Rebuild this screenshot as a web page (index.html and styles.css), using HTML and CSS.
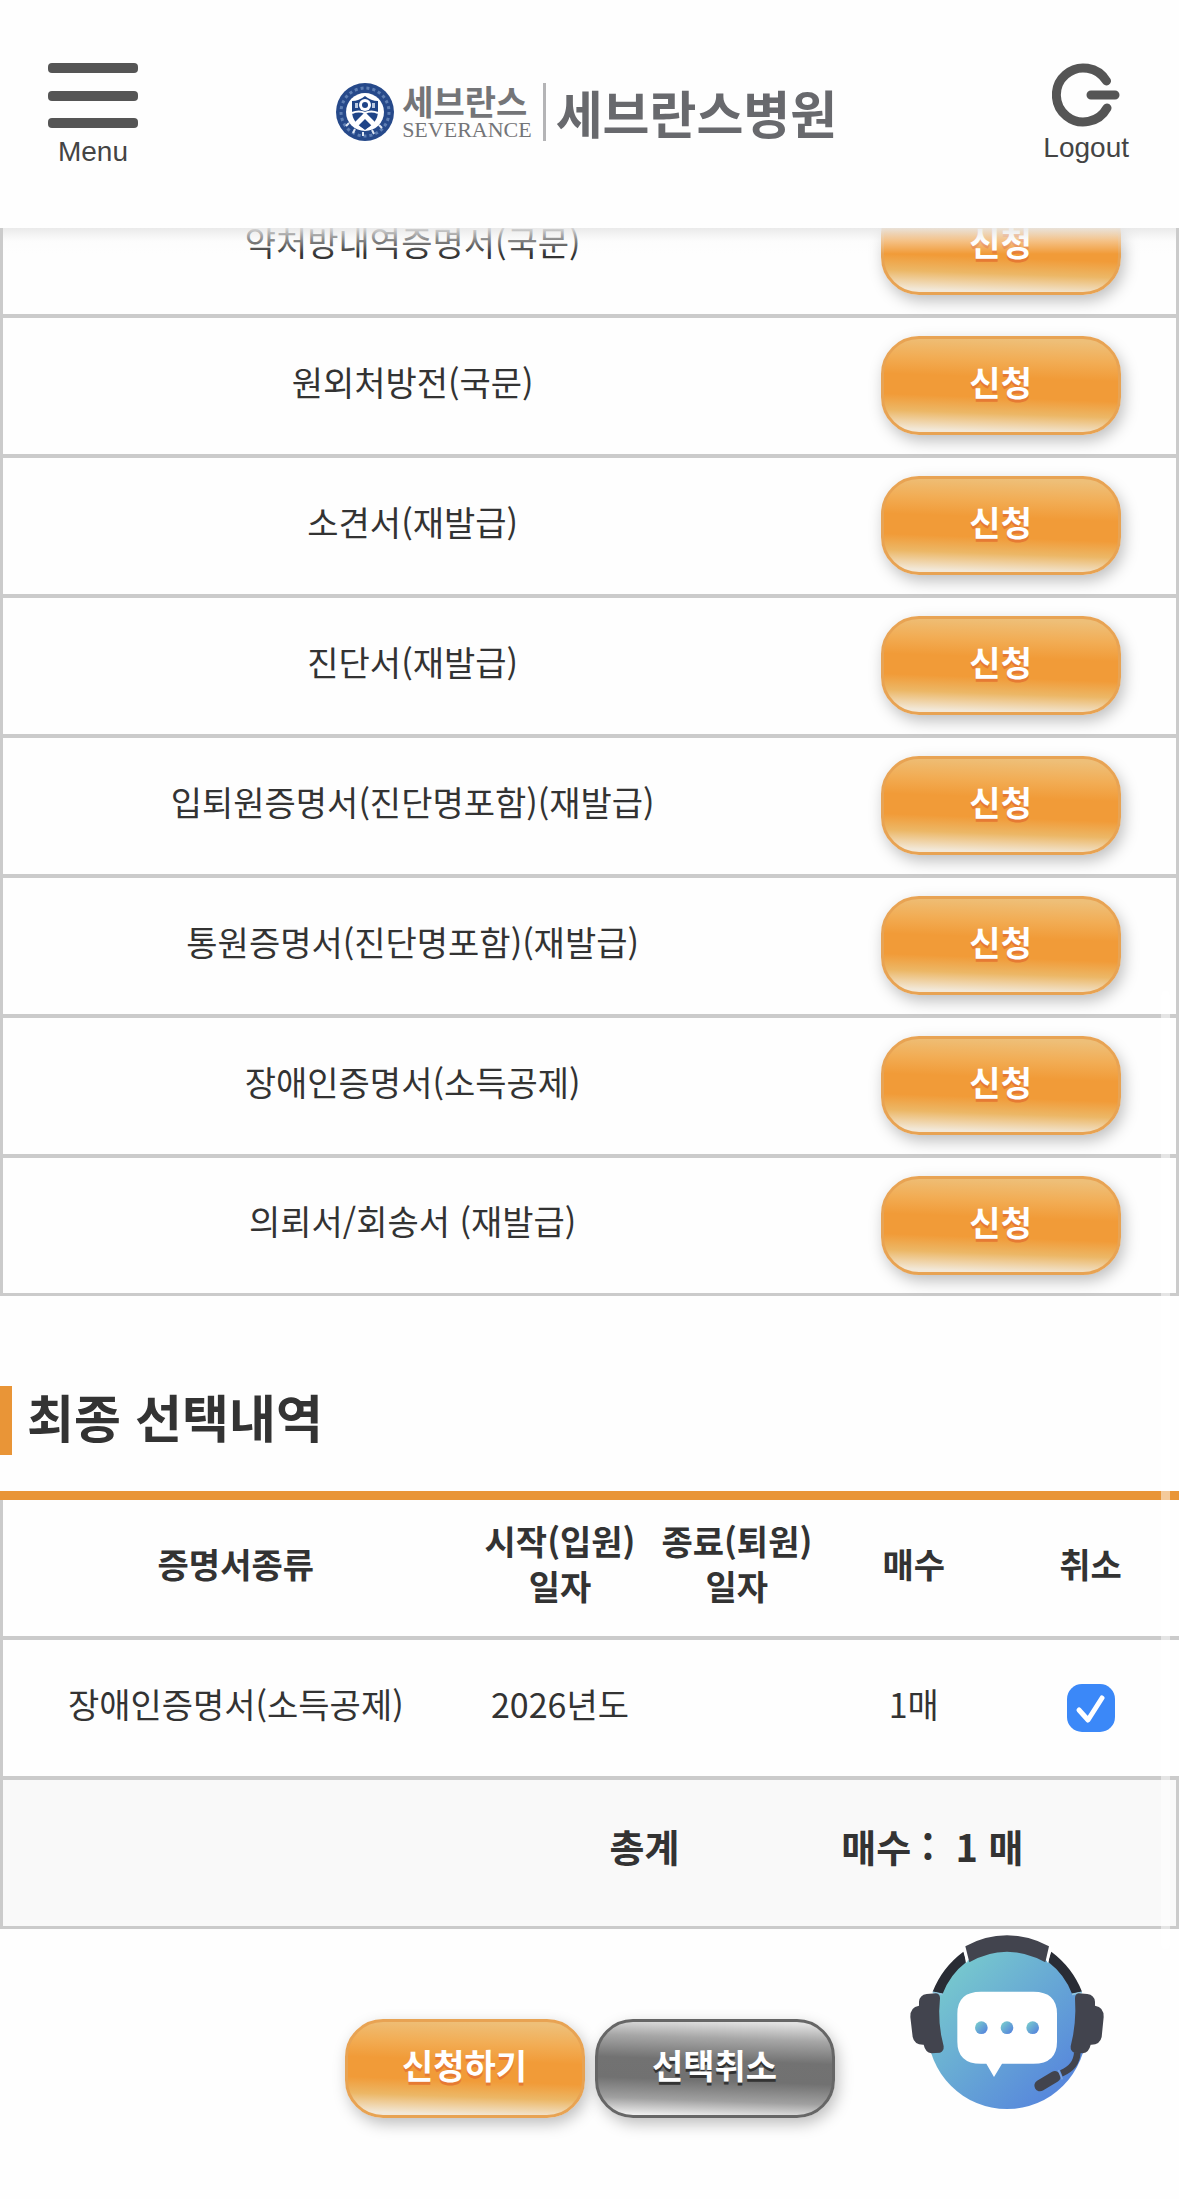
FILE: index.html
```
<!DOCTYPE html>
<html lang="ko">
<head>
    <meta charset="UTF-8">
    <meta name="viewport" content="width=device-width, initial-scale=1.0">
    <title>세브란스병원 - 증명서 신청</title>
    <link rel="stylesheet" href="styles.css">
</head>
<body>
    <header class="header">
        <button type="button" class="menu-btn">
            <span class="bars"><i></i><i></i><i></i></span>
            Menu
        </button>

        <a href="#" class="logo">
            <svg class="emblem" viewBox="0 0 58 58" aria-hidden="true">
                <circle cx="29" cy="29" r="29" fill="#26498a"/>
                <circle cx="29" cy="29" r="24" fill="none" stroke="#5f7fb3" stroke-width="3" stroke-dasharray="2 2" pathLength="100"/>
                <path d="M10 43l3-3M17 50l2-4M27 53v-4M38 51l-2-4M46 45l-3-3" stroke="#dfe7f3" stroke-width="2"/>
                <circle cx="29" cy="29" r="19" fill="#fff"/>
                <path d="M16 18q7 0 13-5 6 5 13 5v10q0 12-13 18-13-6-13-18z" fill="#1f4487"/>
                <path d="M16 30q7-3 13 0 6-3 13 0" fill="none" stroke="#fff" stroke-width="2"/>
                <circle cx="29" cy="22" r="6" fill="#fff"/>
                <circle cx="29" cy="22" r="3" fill="#1f4487"/>
                <path d="M19 20h3v5h-3zM36 20h3v5h-3z" fill="#b9c8e0"/>
                <path d="M18 40l11-11 11 11-4 3-7-7-7 7z" fill="#fff"/>
                <path d="M29 38l5 5-5 4-5-4z" fill="#1f4487"/>
            </svg>
            <span class="logo-brand">
                <strong>세브란스</strong>
                <small>SEVERANCE</small>
            </span>
            <span class="logo-name">세브란스병원</span>
        </a>

        <a href="#" class="logout-btn">
            <svg viewBox="0 0 68 64" aria-hidden="true">
                <path d="M54.500 18A27 27 0 1 0 55 45M39 32h24" fill="none" stroke="#555" stroke-width="9" stroke-linecap="round"/>
            </svg>
            Logout
        </a>
    </header>

    <main>
        <table class="cert-table">
            <tbody>
                <tr><td>약처방내역증명서(국문)</td><td><button type="button" class="btn">신청</button></td></tr>
                <tr><td>원외처방전(국문)</td><td><button type="button" class="btn">신청</button></td></tr>
                <tr><td>소견서(재발급)</td><td><button type="button" class="btn">신청</button></td></tr>
                <tr><td>진단서(재발급)</td><td><button type="button" class="btn">신청</button></td></tr>
                <tr><td>입퇴원증명서(진단명포함)(재발급)</td><td><button type="button" class="btn">신청</button></td></tr>
                <tr><td>통원증명서(진단명포함)(재발급)</td><td><button type="button" class="btn">신청</button></td></tr>
                <tr><td>장애인증명서(소득공제)</td><td><button type="button" class="btn">신청</button></td></tr>
                <tr><td>의뢰서/회송서 (재발급)</td><td><button type="button" class="btn">신청</button></td></tr>
            </tbody>
        </table>

        <h2 class="title">최종 선택내역</h2>

        <table class="select-table">
            <colgroup>
                <col class="col-name"><col><col><col><col>
            </colgroup>
            <thead>
                <tr>
                    <th>증명서종류</th>
                    <th>시작(입원)<br>일자</th>
                    <th>종료(퇴원)<br>일자</th>
                    <th>매수</th>
                    <th>취소</th>
                </tr>
            </thead>
            <tbody>
                <tr>
                    <td>장애인증명서(소득공제)</td>
                    <td>2026년도</td>
                    <td></td>
                    <td>1매</td>
                    <td class="check"><input type="checkbox" aria-label="장애인증명서(소득공제) 취소" checked></td>
                </tr>
            </tbody>
            <tfoot>
                <tr>
                    <td></td>
                    <td colspan="2" class="total">총계</td>
                    <td colspan="2" class="sum">매수 : &nbsp;1 매</td>
                </tr>
            </tfoot>
        </table>

        <div class="actions">
            <button type="button" class="btn">신청하기</button>
            <button type="button" class="btn btn-gray">선택취소</button>
        </div>
    </main>

    <button type="button" class="chat" aria-label="상담 챗봇">
        <svg viewBox="90 76 582 522" aria-hidden="true">
            <defs>
                <linearGradient id="chatBg" x1="0" y1="0" x2="1" y2="1">
                    <stop offset="0.1" stop-color="#78cbcd"/>
                    <stop offset="0.9" stop-color="#5583dd"/>
                </linearGradient>
            </defs>
            <circle cx="381" cy="360" r="238" fill="url(#chatBg)"/>
            <!-- 헤드셋 -->
            <path d="M158 246Q186 174 250 126L260 156Q210 194 188 252z" fill="#292c34"/>
            <path d="M606 246Q578 174 514 126L504 156Q554 194 576 252z" fill="#292c34"/>
            <path d="M252 112l8 46M511 112l-8 46" stroke="#fff" stroke-width="5"/>
            <path d="M158 248l30 6M606 248l-30 6" stroke="#8fc4dd" stroke-width="5"/>
            <path d="M256 110Q315 77 381 77T507 110L496 158Q440 126 381 126T268 158z" fill="#42444e"/>
            <path d="M117 288V276Q119 256 140 253L168 251Q180 252 180 266Q172 340 191 410Q192 425 180 429L154 431Q136 428 131 405Q103 406 98 382L91 322Q90 292 117 288z" fill="#42444e"/>
            <path d="M645 288V276Q643 256 622 253L596 251Q585 252 585 266Q590 340 572 410Q571 425 583 429L609 431Q627 428 632 405Q660 406 665 382L671 322Q672 292 645 288z" fill="#42444e"/>
            <path d="M592 428Q590 472 544 491" fill="none" stroke="#42444e" stroke-width="20"/>
            <path d="M480 528L525 501" stroke="#42444e" stroke-width="34" stroke-linecap="round"/>
            <path d="M535 481l12 28" stroke="#7ba3e2" stroke-width="5"/>
            <!-- 말풍선 -->
            <path d="M303 246H460Q531 246 531 312V396Q531 462 460 462H366L342 502L319 462H303Q232 462 232 396V312Q232 246 303 246z" fill="#fff"/>
            <circle cx="304" cy="354" r="19" fill="url(#chatBg)"/>
            <circle cx="381" cy="354" r="19" fill="url(#chatBg)"/>
            <circle cx="458" cy="354" r="19" fill="url(#chatBg)"/>
        </svg>
    </button>
    <div class="scroll-thumb"></div>
</body>
</html>
```
FILE: styles.css
```
* {
    box-sizing: border-box;
    margin: 0;
    padding: 0;
}
body {
    font-family: "Noto Sans CJK KR", sans-serif;
    font-size: 34px;
    line-height: 45px;
    color: #333;
    background: #fefefe;
}
a {
    color: inherit;
    text-decoration: none;
}
button {
    font-family: inherit;
    border: none;
    background: none;
    cursor: pointer;
}

/* header */
.header {
    position: sticky;
    top: 0;
    z-index: 10;
    display: flex;
    justify-content: space-between;
    align-items: flex-start;
    height: 228px;
    padding: 63px 50px 0 48px;
    background: #fefefe;
}
.header::after {
    content: "";
    position: absolute;
    left: 3px;
    right: 3px;
    top: 100%;
    height: 26px;
    background: linear-gradient(rgba(232, 232, 232, 0.9), rgba(250, 250, 250, 0.4) 50%, rgba(255, 255, 255, 0));
}
.menu-btn,
.logout-btn {
    display: flex;
    flex-direction: column;
    align-items: center;
    font-family: "Liberation Sans", sans-serif;
    font-size: 28px;
    line-height: 32px;
    color: #444;
}
.menu-btn {
    gap: 8px;
}
.logout-btn {
    gap: 5px;
}
.bars {
    display: flex;
    flex-direction: column;
    justify-content: space-between;
    width: 90px;
    height: 65px;
}
.bars i {
    height: 10px;
    border-radius: 4px;
    background: #555;
}
.logout-btn svg {
    width: 68px;
    height: 64px;
}
.logo {
    display: flex;
    align-items: center;
    margin: 20px 8px 0 0;
}
.emblem {
    width: 58px;
    height: 58px;
    margin-right: 8px;
}
.logo-brand {
    display: flex;
    flex-direction: column;
    padding-right: 11px;
    border-right: 3px solid #b4b4b6;
    color: #747578;
}
.logo-brand strong {
    font-size: 34px;
    line-height: 36px;
}
.logo-brand small {
    font-family: "Liberation Serif", serif;
    font-size: 22px;
    line-height: 22px;
}
.logo-name {
    padding-left: 10px;
    font-size: 51px;
    font-weight: 700;
    line-height: 56px;
    color: #68696d;
}

/* tables */
main {
    margin-top: -50px;
    padding-bottom: 80px;
}
table {
    width: 100%;
    table-layout: fixed;
    border-collapse: separate;
    border-spacing: 0;
}
th,
td {
    height: 140px;
    padding-bottom: 10px;
    border-bottom: 4px solid #cbcbcb;
    text-align: center;
    vertical-align: middle;
}
td:first-child,
th:first-child {
    padding-right: 3px;
    border-left: 3px solid #cbcbcb;
}
.cert-table td:first-child {
    width: 70%;
}
.cert-table td:last-child {
    padding: 18px 0 0;
    border-right: 3px solid #cbcbcb;
    vertical-align: top;
}
.cert-table tr:last-child td {
    height: 138px;
    border-bottom-width: 3px;
}
.cert-table .btn {
    display: block;
    margin: 0 auto;
}
.title {
    margin: 90px 0 36px;
    padding: 0 0 9px 15px;
    border-left: 12px solid #e99537;
    font-size: 51px;
    line-height: 60px;
}
.select-table {
    border-top: 9px solid #e99537;
}
.col-name {
    width: 40%;
}
.select-table .check {
    padding: 0;
}
.check input {
    appearance: none;
    display: block;
    width: 48px;
    height: 48px;
    margin: 0 auto;
    border-radius: 15px;
    background: #3b88f8 url("data:image/svg+xml,%3Csvg xmlns='http://www.w3.org/2000/svg' viewBox='0 0 48 48'%3E%3Cpath d='M12 26l9 10 14-22' fill='none' stroke='white' stroke-width='5' stroke-linecap='round' stroke-linejoin='round'/%3E%3C/svg%3E");
}
tfoot td {
    height: 149px;
    padding-bottom: 16px;
    border-bottom-width: 3px;
    background: #f9f9f9;
    font-size: 38px;
    font-weight: 700;
}
tfoot td:last-child {
    border-right: 3px solid #cbcbcb;
}
tfoot .total {
    padding-right: 8px;
}
tfoot .sum {
    padding-left: 16px;
    text-align: left;
}

/* buttons */
.btn {
    width: 240px;
    height: 99px;
    padding-bottom: 8px;
    border: 3px solid #e8a353;
    border-radius: 38px;
    background: linear-gradient(182deg, #eebf78 4%, #f2ad55 24%, #f19b38 42%, #f19b38 62%, #ecb766 78%, #f2e8d8 96%);
    box-shadow: 3px 6px 15px rgba(0, 0, 0, 0.25);
    font-size: 34px;
    font-weight: 700;
    line-height: 45px;
    color: #fff;
    text-shadow: 0 3px 0 #e67a33;
}
.btn-gray {
    border-color: #666;
    background: linear-gradient(182deg, #e2e2e2 3%, #a6a6a6 20%, #727272 42%, #717171 62%, #a0a0a0 82%, #eee 98%);
    text-shadow: 0 3px 0 #333;
}
.actions {
    display: flex;
    justify-content: center;
    gap: 10px;
    margin-top: 90px;
}

/* floating items */
.chat {
    position: fixed;
    right: 75px;
    bottom: 90px;
    z-index: 5;
}
.chat svg {
    display: block;
    width: 194px;
    height: 174px;
}
.scroll-thumb {
    position: fixed;
    right: 9px;
    top: 45%;
    width: 9px;
    height: 960px;
    border-radius: 5px;
    background: rgba(255, 255, 255, 0.5);
    z-index: 6;
}
```
